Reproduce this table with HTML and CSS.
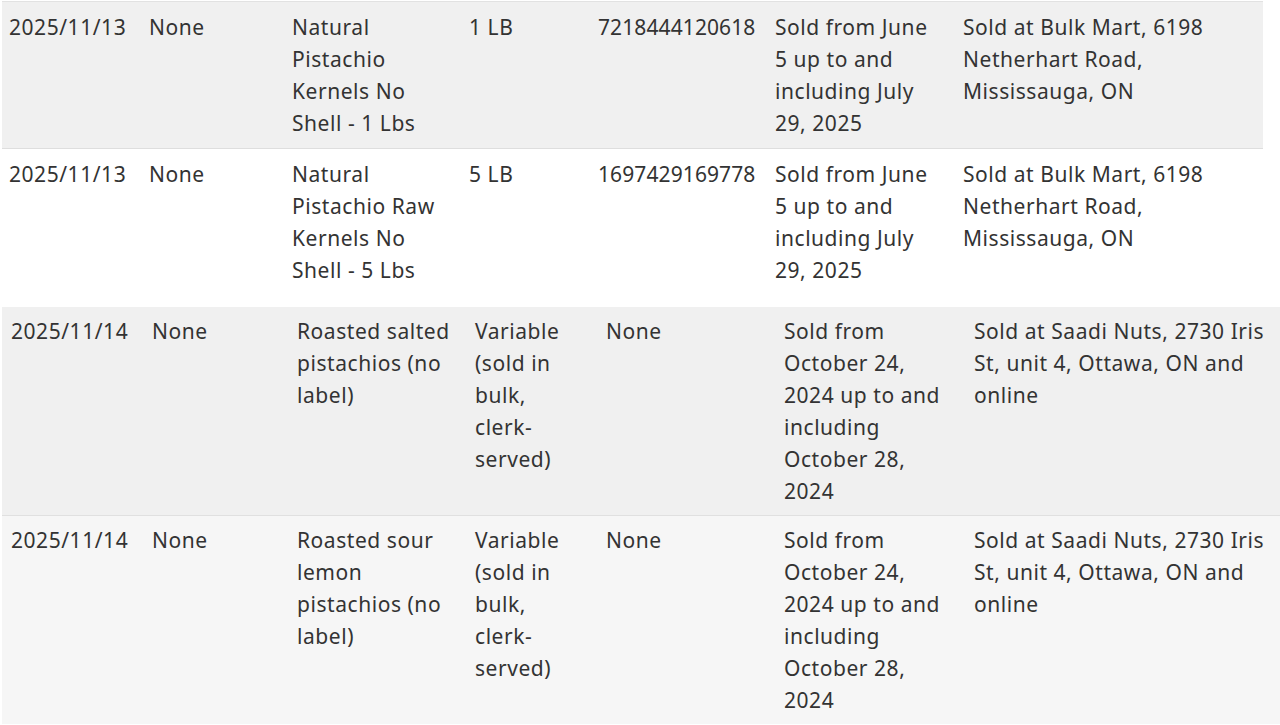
FILE: index.html
```html
<!DOCTYPE html>
<html lang="en">
<head>
<meta charset="utf-8">
<title>Recalls</title>
<link rel="stylesheet" href="styles.css">
</head>
<body>
<table class="recalls recalls-a">
  <colgroup>
    <col class="a1"><col class="a2"><col class="a3"><col class="a4"><col class="a5"><col class="a6"><col class="a7">
  </colgroup>
  <tbody>
    <tr class="row-gray">
      <td class="nowrap">2025/11/13</td>
      <td>None</td>
      <td>Natural Pistachio Kernels No Shell - 1 Lbs</td>
      <td>1 LB</td>
      <td class="upc">7218444120618</td>
      <td>Sold from June 5 up to and including July 29, 2025</td>
      <td>Sold at Bulk Mart, 6198 Netherhart Road, Mississauga, ON</td>
    </tr>
    <tr class="row-white">
      <td class="nowrap">2025/11/13</td>
      <td>None</td>
      <td>Natural Pistachio Raw Kernels No Shell - 5 Lbs</td>
      <td>5 LB</td>
      <td class="upc">1697429169778</td>
      <td>Sold from June 5 up to and including July 29, 2025</td>
      <td>Sold at Bulk Mart, 6198 Netherhart Road, Mississauga, ON</td>
    </tr>
  </tbody>
</table>
<table class="recalls recalls-b">
  <colgroup>
    <col class="b1"><col class="b2"><col class="b3"><col class="b4"><col class="b5"><col class="b6"><col class="b7">
  </colgroup>
  <tbody>
    <tr class="row-gray">
      <td class="nowrap">2025/11/14</td>
      <td>None</td>
      <td>Roasted salted pistachios (no label)</td>
      <td>Variable (sold in bulk, clerk-served)</td>
      <td>None</td>
      <td>Sold from October 24, 2024 up to and including October 28, 2024</td>
      <td>Sold at Saadi Nuts, 2730 Iris St, unit 4, Ottawa, ON and online</td>
    </tr>
    <tr class="row-light">
      <td class="nowrap">2025/11/14</td>
      <td>None</td>
      <td>Roasted sour lemon pistachios (no label)</td>
      <td>Variable (sold in bulk, clerk-served)</td>
      <td>None</td>
      <td>Sold from October 24, 2024 up to and including October 28, 2024</td>
      <td>Sold at Saadi Nuts, 2730 Iris St, unit 4, Ottawa, ON and online</td>
    </tr>
  </tbody>
</table>
</body>
</html>
```

FILE: styles.css
```css
html, body {
  margin: 0;
  padding: 0;
  background: #ffffff;
  overflow: hidden;
}
body {
  font-family: "Noto Sans", "Open Sans", sans-serif;
  font-size: 21px;
  line-height: 32px;
  letter-spacing: 0.55px;
  color: #333333;
  width: 1280px;
  height: 725px;
}
.recalls {
  border-collapse: collapse;
  table-layout: fixed;
}
.recalls td {
  vertical-align: top;
  text-align: left;
  overflow-wrap: normal;
}
.recalls td.nowrap {
  white-space: nowrap;
}
.recalls td.upc {
  white-space: nowrap;
  letter-spacing: 0.1px;
}
.recalls-a {
  width: 1261px;
  margin: 1px 0 12px 2px;
  border-top: 1px solid #e2e2e2;
}
.recalls-a td {
  padding: 9px 13px 9px 7px;
}
.recalls-a .row-gray td {
  border-bottom: 1px solid #dedede;
}
.a1 { width: 140px; }
.a2 { width: 143px; }
.a3 { width: 177px; }
.a4 { width: 129px; }
.a5 { width: 177px; }
.a6 { width: 188px; }
.a7 { width: 307px; }

.recalls-b {
  width: 1285px;
  margin: 0 0 0 2px;
}
.recalls-b td {
  padding: 8px 11px 8px 9px;
}
.recalls-b .row-gray td {
  border-bottom: 1px solid #e0e0e0;
}
.b1 { width: 141px; }
.b2 { width: 145px; }
.b3 { width: 178px; }
.b4 { width: 131px; }
.b5 { width: 178px; }
.b6 { width: 190px; }
.b7 { width: 322px; }

.row-gray { background: #f0f0f0; }
.row-white { background: #ffffff; }
.row-light { background: #f6f6f6; }
```
